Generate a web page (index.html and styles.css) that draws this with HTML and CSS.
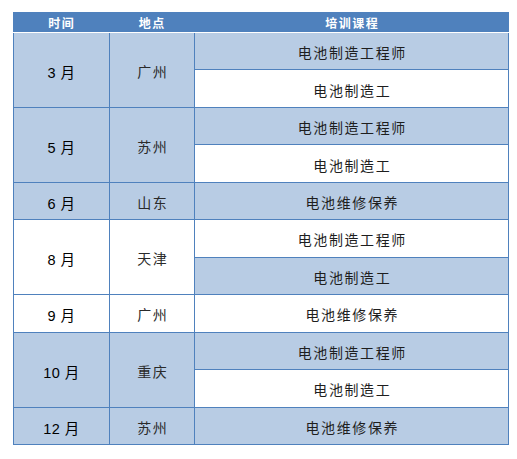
FILE: index.html
```html
<!DOCTYPE html>
<html lang="zh-CN">
<head>
<meta charset="utf-8">
<title>培训课程</title>
<link rel="stylesheet" href="styles.css">
</head>
<body>
<div class="schedule">
  <div class="head">
    <div class="hcell">时间</div>
    <div class="hcell">地点</div>
    <div class="hcell">培训课程</div>
  </div>
  <div class="body">
    <div class="cell time blue span2">3 月</div>
    <div class="cell place blue span2">广州</div>
    <div class="cell course blue">电池制造工程师</div>
    <div class="cell course white">电池制造工</div>

    <div class="cell time blue span2">5 月</div>
    <div class="cell place blue span2">苏州</div>
    <div class="cell course blue">电池制造工程师</div>
    <div class="cell course white">电池制造工</div>

    <div class="cell time blue">6 月</div>
    <div class="cell place blue">山东</div>
    <div class="cell course blue">电池维修保养</div>

    <div class="cell time white span2">8 月</div>
    <div class="cell place white span2">天津</div>
    <div class="cell course white">电池制造工程师</div>
    <div class="cell course blue">电池制造工</div>

    <div class="cell time white">9 月</div>
    <div class="cell place white">广州</div>
    <div class="cell course white">电池维修保养</div>

    <div class="cell time blue span2">10 月</div>
    <div class="cell place blue span2">重庆</div>
    <div class="cell course blue">电池制造工程师</div>
    <div class="cell course white">电池制造工</div>

    <div class="cell time blue">12 月</div>
    <div class="cell place blue">苏州</div>
    <div class="cell course blue">电池维修保养</div>
  </div>
</div>
</body>
</html>
```
FILE: styles.css
```css
html, body {
  margin: 0;
  padding: 0;
  background: #ffffff;
}

body {
  font-family: "Liberation Sans", "Noto Sans CJK SC", sans-serif;
  color: #1e1e1e;
}

.schedule {
  margin: 12px 0 0 13px;
  width: 496px;
}

.head {
  display: grid;
  grid-template-columns: 96px 85px 1fr;
  height: 20px;
  background: #4f81bd;
  border-bottom: 1px solid #ffffff;
}

.hcell {
  display: flex;
  align-items: center;
  justify-content: center;
  color: #ffffff;
  font-weight: bold;
  font-size: 12px;
  letter-spacing: 1.5px;
  padding-left: 1.5px;
  font-family: "Noto Sans CJK SC", sans-serif;
}

.body {
  display: grid;
  grid-template-columns: 95px 84px 1fr;
  grid-template-rows: repeat(11, 1fr);
  gap: 1px;
  padding: 0 1px 1px 1px;
  height: 412px;
  box-sizing: border-box;
  background: #4f81bd;
}

.cell {
  display: flex;
  align-items: center;
  justify-content: center;
  font-size: 14px;
  padding-top: 2px;
}

.span2 {
  grid-row: span 2;
}

.time {
  grid-column: 1;
  font-size: 14.5px;
  letter-spacing: 0.5px;
  color: #000000;
  padding-top: 3px;
}

.place {
  grid-column: 2;
  letter-spacing: 1.5px;
  padding-left: 1.5px;
  font-family: "Noto Sans CJK SC", sans-serif;
  color: #2a2a2a;
}

.course {
  grid-column: 3;
  letter-spacing: 1.6px;
  padding-left: 1.6px;
  font-family: "Noto Sans CJK SC", sans-serif;
  color: #1e1e1e;
}

.blue {
  background: #b8cce4;
}

.white {
  background: #ffffff;
}
```
